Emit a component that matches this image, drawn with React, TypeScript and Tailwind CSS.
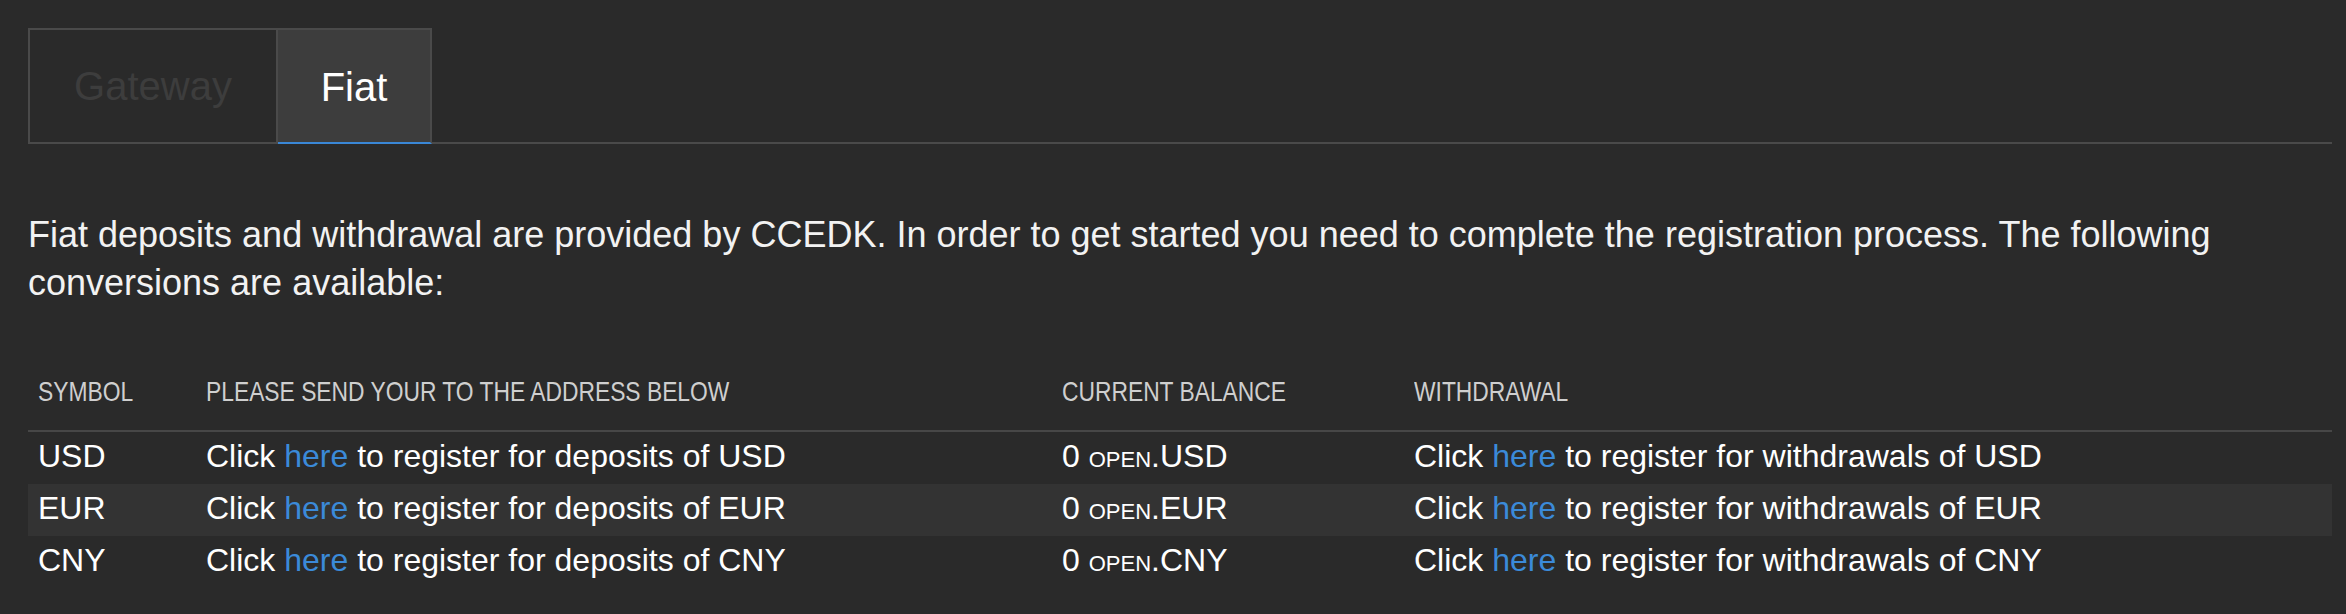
import React from "react";

const rows = [
  { sym: "USD", bg: "" },
  { sym: "EUR", bg: "bg-[#333333]" },
  { sym: "CNY", bg: "" },
];

function Head({ children }: { children: React.ReactNode }) {
  return (
    <div className="pl-[10px] pt-[22px] pb-[22px] text-[28px] leading-[32px] text-[#cfcfcf] whitespace-nowrap">
      <span className="inline-block origin-left scale-x-[0.815]">{children}</span>
    </div>
  );
}

export default function App() {
  return (
    <div
      className="min-h-[614px] bg-[#2a2a2a] pl-[28px] pr-[14px] pt-[28px] text-white"
      style={{ fontFamily: '"Liberation Sans", Arial, Helvetica, sans-serif' }}
    >
      {/* Tabs */}
      <div className="flex border-b-2 border-[#4a4a4a]">
        <div className="flex h-[114px] w-[250px] items-center justify-center border-l-2 border-r-2 border-t-2 border-[#4a4a4a] text-[40px] text-[#3d3d3d]">
          Gateway
        </div>
        <div className="relative -mb-[2px] flex h-[116px] w-[154px] items-center justify-center border-r-2 border-t-2 border-b-2 border-r-[#4a4a4a] border-t-[#4a4a4a] border-b-[#3a87d6] bg-[#3d3d3d] text-[40px] text-white">
          <span className="pt-[2px]">Fiat</span>
        </div>
      </div>

      {/* Paragraph */}
      <p className="mt-[67px] text-[36px] leading-[48px] text-[#f2f2f2]">
        Fiat deposits and withdrawal are provided by CCEDK. In order to get started you need to complete the registration process. The following conversions are available:
      </p>

      {/* Table */}
      <div className="mt-[47px]">
        <div className="grid grid-cols-[168px_856px_352px_1fr] border-b-2 border-[#474747]">
          <Head>SYMBOL</Head>
          <Head>PLEASE SEND YOUR TO THE ADDRESS BELOW</Head>
          <Head>CURRENT BALANCE</Head>
          <Head>WITHDRAWAL</Head>
        </div>
        {rows.map((r) => (
          <div
            key={r.sym}
            className={`grid grid-cols-[168px_856px_352px_1fr] text-[32px] leading-[48px] text-white ${r.bg}`}
          >
            <div className="pl-[10px] pb-[4px]">{r.sym}</div>
            <div className="pl-[10px] pb-[4px] whitespace-nowrap">
              Click <span className="text-[#3b8ad9]">here</span> to register for deposits of {r.sym}
            </div>
            <div className="pl-[10px] pb-[4px] whitespace-nowrap">
              0 <span className="[font-variant-caps:small-caps]">open</span>.{r.sym}
            </div>
            <div className="pl-[10px] pb-[4px] whitespace-nowrap">
              Click <span className="text-[#3b8ad9]">here</span> to register for withdrawals of {r.sym}
            </div>
          </div>
        ))}
      </div>
    </div>
  );
}
